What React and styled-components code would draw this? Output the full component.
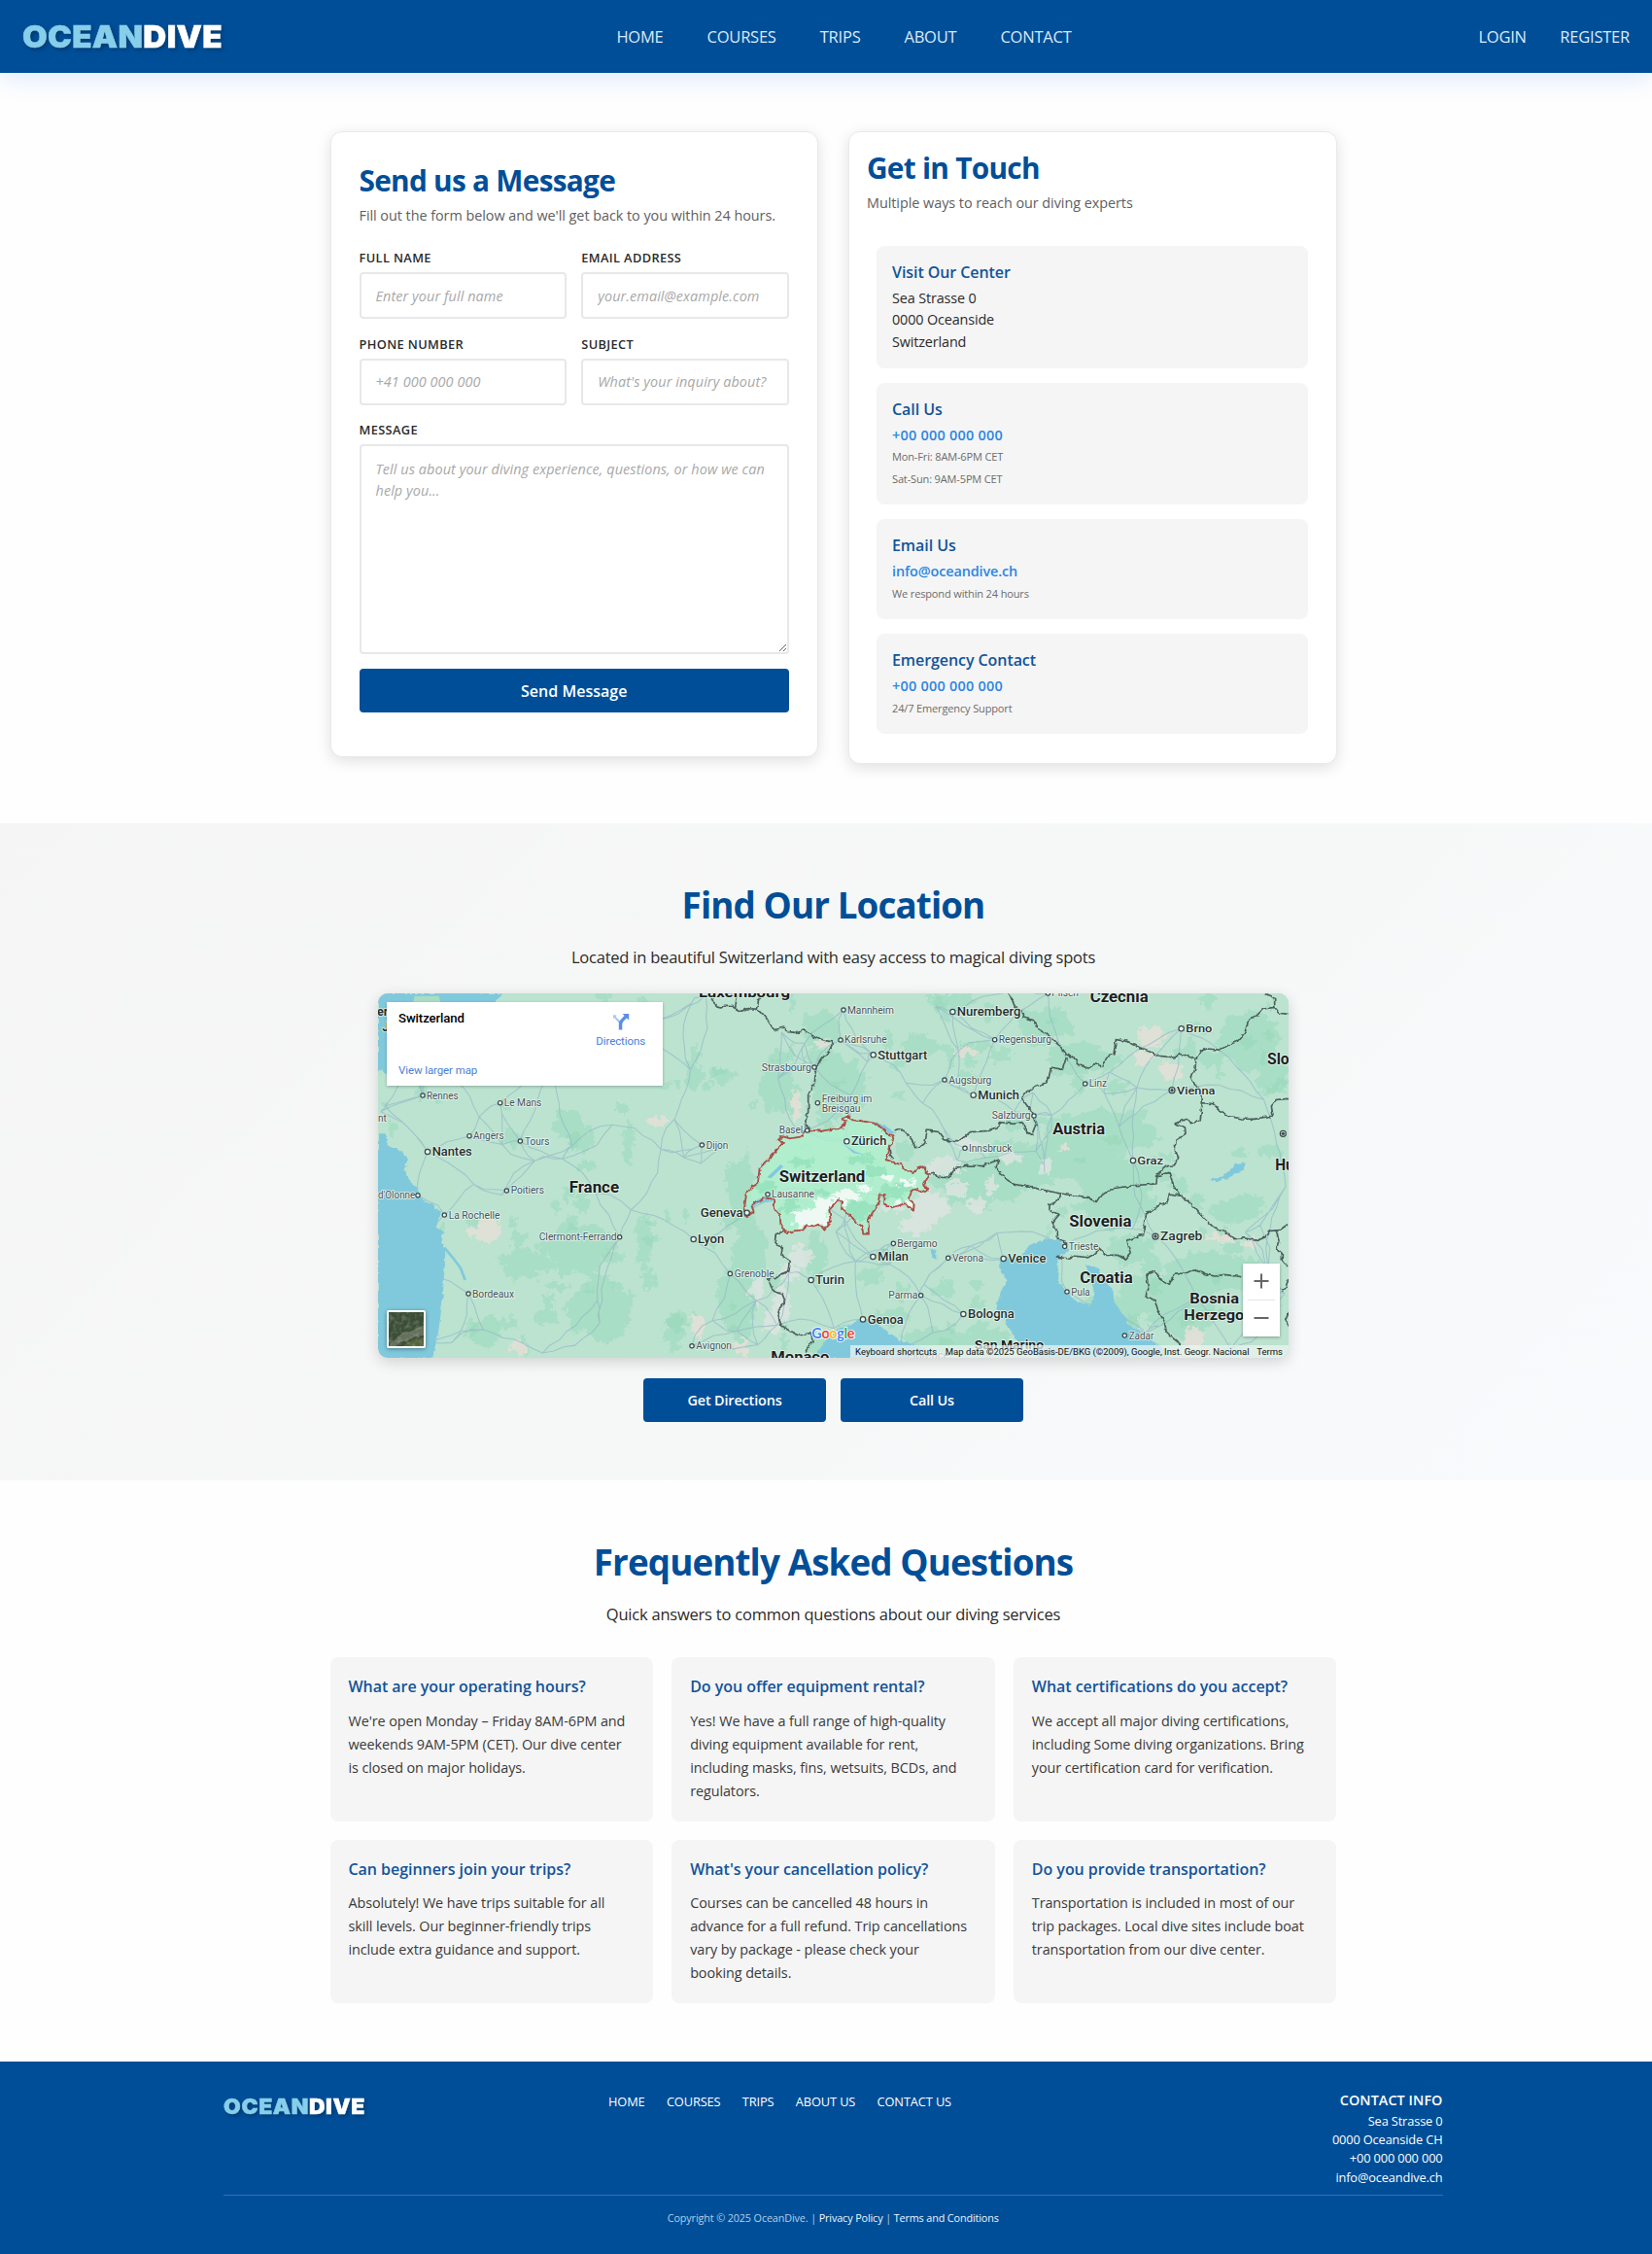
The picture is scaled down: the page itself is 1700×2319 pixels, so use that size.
import React from 'react';
import styled, { createGlobalStyle, css } from 'styled-components';

const blue = '#004e98';
const ui = "'Open Sans', 'Noto Sans', sans-serif";
const mapFont = "Roboto, 'Liberation Sans', sans-serif";

const GlobalStyle = createGlobalStyle`
  *, *::before, *::after { box-sizing: border-box; }
  body { margin: 0; background: #fefefe; font-family: ${ui}; color: #2b2b2b; }
  h2, h3, p { margin: 0; }
  a { color: inherit; text-decoration: none; }
`;

const Page = styled.div`
  width: 1700px;
  height: 2319px;
  overflow: hidden;
  display: flex;
  flex-direction: column;
`;

/* ---------- header ---------- */

const Header = styled.header`
  position: relative;
  flex: none;
  height: 74.8px;
  padding: 1px 23px 0;
  display: flex;
  align-items: center;
  justify-content: space-between;
  background: ${blue};
  box-shadow: 0 6px 24px rgba(0, 110, 255, 0.13);
`;

const Logo = styled.a`
  display: block;
  width: ${(p) => (p.$small ? 146 : 192.5)}px;
  font: 900 ${(p) => (p.$small ? 21.4 : 31)}px/1 Inter, 'Liberation Sans', sans-serif;
  letter-spacing: ${(p) => (p.$small ? 0.6 : 0.3)}px;
  -webkit-text-stroke: 0.5px currentColor;
  color: #fff;
  white-space: nowrap;
  transform: scaleX(1.07);
  transform-origin: left;
  text-shadow: 2px 2px 4px rgba(0, 0, 0, 0.3);
  ${(p) => p.$small && css`margin-top: 7px;`}
`;

const LogoTint = styled.span`
  color: #87ceeb;
`;

const Nav = styled.nav`
  display: flex;
  gap: ${(p) => p.$gap}px;
`;

const NavLink = styled.a`
  font-size: 16.5px;
  line-height: 26px;
  letter-spacing: -0.22px;
  color: #dbe9f7;
`;

/* ---------- sections ---------- */

const Section = styled.section`
  flex: none;
  padding: ${(p) => p.$pad};
  display: flex;
  flex-direction: column;
  align-items: center;
  ${(p) => p.$tinted && css`background: linear-gradient(135deg, #f5f5f5 0%, #f6f8f7 50%, #f8fafd 100%);`}
`;

const SectionTitle = styled.h2`
  font-size: 36.8px;
  line-height: 50px;
  font-weight: 700;
  letter-spacing: -0.9px;
  color: ${blue};
`;

const SectionText = styled.p`
  margin-top: 16.6px;
  font-size: 16.5px;
  line-height: 26px;
  letter-spacing: -0.22px;
`;

const Button = styled.button`
  height: ${(p) => (p.$wide ? 45.2 : 45.7)}px;
  width: ${(p) => (p.$wide ? '100%' : '188px')};
  padding: 0;
  border: 0;
  border-radius: 4px;
  background: ${blue};
  color: #fff;
  font: 600 ${(p) => (p.$wide ? 16 : 14.4)}px ${ui};
  letter-spacing: ${(p) => (p.$wide ? 0.03 : -0.13)}px;
`;

/* ---------- contact ---------- */

const ContactGrid = styled.div`
  width: 1036px;
  display: grid;
  grid-template-columns: 1fr 1fr;
  align-items: start;
  gap: 31px;
`;

const Card = styled.div`
  padding: ${(p) => p.$pad};
  border: 1px solid #e9e9ea;
  border-radius: 12px;
  background: #fff;
  box-shadow: 0 4px 15px rgba(0, 0, 0, 0.12);
`;

const CardTitle = styled.h2`
  font-size: 29.8px;
  line-height: 40px;
  letter-spacing: -0.72px;
  color: ${blue};
`;

const CardLead = styled.p`
  margin-top: 4px;
  font-size: 14.4px;
  line-height: 24px;
  letter-spacing: -0.04px;
  color: #606060;
`;

const Form = styled.form`
  margin-top: 21.4px;
  display: flex;
  flex-direction: column;
  gap: 15.3px;
`;

const FieldRow = styled.div`
  display: grid;
  grid-template-columns: 1fr 1fr;
  gap: 15px;
`;

const Field = styled.label`
  display: flex;
  flex-direction: column;
  gap: 5px;
`;

const FieldName = styled.span`
  font-size: 12.8px;
  line-height: 20px;
  font-weight: 600;
  letter-spacing: 0.37px;
  text-transform: uppercase;
`;

const control = css`
  width: 100%;
  border: 2px solid #e7e8ea;
  border-radius: 4px;
  background: #fff;
  font: 400 14.4px/22.5px ${ui};
  letter-spacing: 0.09px;
  &::placeholder { color: #a8a8a8; font-style: italic; opacity: 1; }
`;

const Input = styled.input`
  ${control}
  height: 48.3px;
  padding: 0 15px;
`;

const TextArea = styled.textarea`
  ${control}
  display: block;
  height: 215.5px;
  padding: 12.5px 15px;
  resize: vertical;
`;

const InfoList = styled.div`
  margin: 32px 10px 0;
  display: flex;
  flex-direction: column;
  gap: 15.3px;
`;

const InfoBox = styled.div`
  padding: 14px 16px 15px;
  border-radius: 8px;
  background: #f5f5f5;
`;

const InfoTitle = styled.h3`
  margin-bottom: 2px;
  font-size: 16px;
  line-height: 26px;
  font-weight: 600;
  letter-spacing: -0.07px;
  color: #12549a;
`;

const InfoText = styled.p`
  padding-top: 0.4px;
  font-size: 14.4px;
  line-height: 22.6px;
  letter-spacing: -0.14px;
`;

const InfoLink = styled.a`
  display: block;
  font-size: 14.4px;
  line-height: 23.3px;
  font-weight: 600;
  letter-spacing: ${(p) => (p.$phone ? 0.27 : -0.11)}px;
  color: #2b86e3;
`;

const InfoNote = styled.p`
  font-size: 11px;
  line-height: 22.4px;
  letter-spacing: -0.14px;
  color: #6c6c6c;
`;

/* ---------- map ---------- */

const MapFrame = styled.div`
  position: relative;
  width: 937px;
  height: 375.4px;
  border-radius: 10px;
  overflow: hidden;
  background: #bbe3d0;
  font-family: ${mapFont};
`;

const MapShadow = styled.div`
  margin-top: 23.5px;
  border-radius: 10px;
  box-shadow: 0 4px 15px rgba(0, 0, 0, 0.16);
`;

const MapArt = styled.svg`
  display: block;
  width: 100%;
  height: 100%;
`;

const PlaceCard = styled.div`
  position: absolute;
  left: 9px;
  top: 9.5px;
  width: 284px;
  height: 86px;
  padding: 9px 18px 9px 12px;
  display: flex;
  justify-content: space-between;
  background: #fff;
  box-shadow: 0 1px 3px rgba(0, 0, 0, 0.25);
`;

const PlaceColumn = styled.div`
  display: flex;
  flex-direction: column;
  justify-content: space-between;
`;

const PlaceName = styled.span`
  font-size: 13.2px;
  line-height: 15px;
  font-weight: 500;
  letter-spacing: -0.1px;
  color: #000;
`;

const MapLink = styled.a`
  font-size: 11.5px;
  line-height: 14px;
  letter-spacing: -0.1px;
  color: #4a80dc;
`;

const Directions = styled.a`
  display: flex;
  flex-direction: column;
  align-items: center;
  gap: 4px;
  padding-top: 2px;
  font-size: 11.5px;
  letter-spacing: -0.1px;
  line-height: 14px;
  color: #4a80dc;
`;

const ZoomControl = styled.div`
  position: absolute;
  left: 890px;
  top: 277.7px;
  width: 38px;
  height: 75.6px;
  display: flex;
  flex-direction: column;
  align-items: center;
  background: #fff;
  box-shadow: 0 1px 3px rgba(0, 0, 0, 0.3);
`;

const ZoomRule = styled.div`
  width: 28px;
  height: 1px;
  background: #e6e6e6;
`;

const ZoomButton = styled.div`
  flex: 1;
  display: flex;
  align-items: center;
`;

const Satellite = styled.div`
  position: absolute;
  left: 9px;
  top: 326.3px;
  width: 39.5px;
  height: 39px;
  border: 2px solid #fff;
  border-radius: 2px;
  overflow: hidden;
  box-shadow: 0 1px 4px rgba(0, 0, 0, 0.4);
`;

const Attribution = styled.div`
  position: absolute;
  right: 0;
  bottom: 0;
  width: 451px;
  height: 13px;
  padding: 0 6px 0 5px;
  display: flex;
  align-items: center;
  background: rgba(238, 245, 243, 0.72);
  font-size: 9.5px;
  line-height: 13px;
  color: #111;
  white-space: nowrap;
`;

const Credit = styled.span`
  width: ${(p) => p.$w}px;
  letter-spacing: ${(p) => p.$ls || 0}px;
`;

const MapActions = styled.div`
  margin-top: 20.3px;
  display: flex;
  gap: 15px;
`;

/* Map space is three units per pixel; the eastern half starts at x = 1440. */
const EAST = 1440;
const parse = (s, dx = 0) => s.trim().split(/\s+/).map((p) => {
  const [x, y] = p.split(',').map(Number);
  return [x + dx, y];
});
const line = (pts) => 'M' + pts.map((p) => p.join(' ')).join('L');
const west = (s) => line(parse(s));
const east = (s) => line(parse(s, EAST));

const random = (seed) => () => {
  seed = (seed * 16807) % 2147483647;
  return (seed - 1) / 2147483646;
};

const blob = (cx, cy, rx, ry, seed) => {
  const r = random(seed * 7919 + 13);
  const pts = [];
  for (let i = 0; i < 16; i++) {
    const a = (i / 16) * Math.PI * 2;
    const k = 0.65 + r() * 0.5;
    pts.push([(cx + Math.cos(a) * rx * k).toFixed(1), (cy + Math.sin(a) * ry * k).toFixed(1)]);
  }
  return line(pts) + 'Z';
};
const blobs = (list, seed) => list.map((b, i) => blob(...b, i + seed)).join('');

const cities = [
  // text, x, baseline, width, size, marker x, marker y, marker kind
  ['Rennes', 177, 363, 98, 30, 165, 352],
  ['Le Mans', 416, 386, 116, 30, 404, 375],
  ['Angers', 321, 488, 95, 30, 309, 477],
  ['Tours', 480, 504, 76, 30, 466, 493],
  ['Nantes', 194, 537, 123, 37, 180, 526],
  ['Poitiers', 437, 656, 103, 30, 424, 646],
  ["d'Olonne", 27, 670, 115, 30, 150, 660],
  ['La Rochelle', 245, 732, 158, 30, 232, 721],
  ['Clermont-Ferrand', 524, 800, 240, 30, 773, 789],
  ['Lyon', 1014, 809, 82, 37, 1001, 796],
  ['Geneva', 1022, 726, 132, 37, 1166, 714],
  ['Dijon', 1040, 516, 68, 30, 1027, 505],
  ['Strasbourg', 1211, 276, 154, 30, 1374, 265],
  ['Basel', 1265, 470, 74, 30, 1352, 460],
  ['Lausanne', 1242, 668, 132, 30, 1230, 657],
  ['Grenoble', 1127, 913, 123, 30, 1114, 902],
  ['Turin', 1377, 935, 90, 37, 1364, 922],
  ['Bordeaux', 318, 975, 129, 30, 306, 964],
  ['Avignon', 1009, 1136, 110, 30, 996, 1125],
  ['Mannheim', EAST + 36, 99, 144, 30, EAST + 24, 88],
  ['Nuremberg', EAST + 374, 107, 197, 37, EAST + 361, 94],
  ['Karlsruhe', EAST + 27, 191, 131, 30, EAST + 15, 181],
  ['Regensburg', EAST + 503, 191, 163, 30, EAST + 491, 180],
  ['Stuttgart', EAST + 130, 240, 153, 37, EAST + 116, 227],
  ['Augsburg', EAST + 349, 316, 132, 30, EAST + 336, 304],
  ['Munich', EAST + 439, 364, 128, 37, EAST + 425, 351],
  ['Linz', EAST + 782, 326, 55, 30, EAST + 770, 316],
  ['Salzburg', EAST + 482, 425, 120, 30, EAST + 612, 415],
  ['Zürich', EAST + 48, 506, 109, 37, EAST + 34, 494],
  ['Innsbruck', EAST + 411, 526, 133, 30, EAST + 399, 515],
  ['Brno', EAST + 1081, 156, 81, 34, EAST + 1067, 146],
  ['Vienna', EAST + 1053, 348, 118, 35, EAST + 1038, 336, 'capital'],
  ['Graz', EAST + 931, 565, 80, 35, EAST + 918, 553],
  ['Zagreb', EAST + 1002, 800, 130, 37, EAST + 987, 787, 'capital'],
  ['Bergamo', EAST + 190, 820, 124, 30, EAST + 178, 809],
  ['Milan', EAST + 130, 863, 95, 37, EAST + 115, 850],
  ['Verona', EAST + 360, 865, 96, 30, EAST + 347, 854],
  ['Venice', EAST + 532, 868, 117, 37, EAST + 518, 856],
  ['Trieste', EAST + 719, 829, 92, 30, EAST + 707, 818],
  ['Parma', EAST + 163, 980, 90, 30, EAST + 263, 969],
  ['Pula', EAST + 727, 969, 58, 30, EAST + 714, 958],
  ['Bologna', EAST + 408, 1040, 143, 36, EAST + 394, 1027],
  ['Genoa', EAST + 98, 1057, 111, 36, EAST + 84, 1043],
  ['Zadar', EAST + 905, 1104, 77, 30, EAST + 892, 1093],
  ['Pilsen', EAST + 667, 47, 83, 30, EAST + 655, 37],
];

const countries = [
  ['Luxembourg', 1017, 50, 282, 46],
  ['France', 617, 651, 154, 48],
  ['Switzerland', 1265, 619, 266, 48],
  ['Monaco', 1240, 1175, 180, 46],
  ['Czechia', EAST + 785, 63, 180, 48],
  ['Austria', EAST + 670, 471, 161, 48],
  ['Slovenia', EAST + 721, 757, 192, 48],
  ['Croatia', EAST + 754, 932, 163, 48],
  ['Bosnia', EAST + 1093, 993, 152, 46],
  ['Herzego', EAST + 1075, 1045, 186, 46],
  ['San Marino', EAST + 428, 1136, 214, 40],
  ['Slo', EAST + 1332, 256, 68, 48],
  ['Hu', EAST + 1357, 583, 58, 48],
];

const nodes = (() => {
  const r = random(4242);
  const out = cities.map((c) => [c[5], c[6]]);
  for (let i = 0; i < 95; i++) out.push([30 + r() * 2800, 40 + r() * 1120]);
  return out;
})();

const roads = (() => {
  const r = random(99);
  const seen = new Set();
  const out = [];
  nodes.forEach((a, i) => {
    nodes
      .map((b, j) => [Math.hypot(a[0] - b[0], a[1] - b[1]), j])
      .filter(([, j]) => j !== i)
      .sort((p, q) => p[0] - q[0])
      .slice(0, 3)
      .forEach(([d, j]) => {
        const key = Math.min(i, j) + '-' + Math.max(i, j);
        if (seen.has(key) || d > 420) return;
        seen.add(key);
        const b = nodes[j];
        const n = Math.max(3, Math.round(d / 35));
        const bend = (r() - 0.5) * d * 0.25;
        const pts = [];
        for (let k = 0; k <= n; k++) {
          const t = k / n;
          const w = Math.sin(t * Math.PI) * bend + (k % n ? (r() - 0.5) * 10 : 0);
          pts.push([
            (a[0] + (b[0] - a[0]) * t - ((b[1] - a[1]) / (d || 1)) * w).toFixed(1),
            (a[1] + (b[1] - a[1]) * t + ((b[0] - a[0]) / (d || 1)) * w).toFixed(1),
          ]);
        }
        out.push(line(pts));
      });
  });
  return out.join('');
})();

const forests = (() => {
  const r = random(777);
  const out = [];
  for (let i = 0; i < 150; i++) {
    out.push(blob(30 + r() * 2800, 40 + r() * 1110, 10 + r() * 32, 8 + r() * 26, i + 1));
  }
  return out.join('');
})();

const woodland = blobs([
  [610, 440, 50, 60], [655, 490, 40, 60], [1270, 330, 60, 110], [1390, 150, 60, 70], [1420, 330, 50, 130],
  [1090, 290, 40, 28], [1000, 290, 30, 45], [1150, 640, 50, 130], [850, 800, 30, 90], [800, 500, 20, 70],
  [1180, 830, 60, 110], [360, 1080, 60, 50], [940, 1080, 35, 60], [1140, 970, 60, 140], [1380, 860, 40, 80],
  [2260, 450, 190, 70], [2150, 540, 190, 70], [2330, 600, 170, 60], [2000, 560, 160, 70], [1900, 620, 150, 90],
  [2080, 140, 90, 60], [2200, 240, 120, 50], [2300, 700, 120, 70], [2350, 830, 90, 50], [2420, 960, 110, 70],
  [2520, 1010, 130, 100], [2600, 900, 160, 60], [2720, 180, 100, 110], [2790, 280, 60, 70], [1480, 320, 60, 90],
  [1700, 200, 60, 40], [1800, 60, 90, 30], [1760, 1110, 130, 50], [1900, 1110, 80, 60], [1600, 1040, 70, 30],
  [700, 1010, 110, 110], [640, 820, 120, 90], [480, 870, 90, 50], [2330, 1020, 50, 90], [2690, 700, 90, 50],
], 300);

const snow = blobs([
  [1730, 700, 60, 60], [1690, 750, 60, 30], [1780, 570, 60, 30], [1875, 690, 35, 30], [1980, 545, 50, 16],
  [1920, 630, 20, 35], [1810, 640, 40, 30], [1330, 850, 45, 35], [1195, 960, 26, 50], [1270, 990, 35, 60],
  [1250, 1050, 35, 45], [1620, 700, 40, 16], [1850, 500, 50, 16], [2090, 570, 20, 25], [1300, 900, 30, 30],
], 500);

const towns = blobs([
  [890, 435, 32, 22], [360, 770, 50, 45], [1015, 1065, 22, 45], [465, 1130, 30, 25], [1315, 385, 14, 60],
  [1405, 190, 28, 14], [2415, 170, 50, 38], [2385, 235, 34, 26], [2475, 275, 38, 30], [1845, 215, 38, 14],
  [2545, 1100, 36, 40], [2630, 790, 55, 14], [2720, 810, 26, 14], [2150, 515, 24, 10], [1150, 1130, 25, 30],
], 700);

const glaciers = blobs([
  [1370, 725, 70, 26], [1420, 690, 50, 24], [1470, 660, 40, 18], [1660, 622, 26, 14], [1600, 604, 24, 10],
  [1340, 745, 40, 18], [1530, 640, 26, 12], [1650, 685, 22, 10], [1395, 735, 30, 18],
], 900);

const valleys = blobs([
  [1500, 705, 60, 36], [1620, 645, 60, 24], [1560, 585, 44, 20], [1300, 695, 34, 26], [1220, 630, 40, 20],
  [1400, 650, 30, 14], [1520, 550, 50, 16], [1330, 560, 40, 16],
], 950);

const swissOutline =
  parse('1360,460 1400,462 1440,455 1460,455 1470,430 1460,424 1480,415 1492,428 1515,430 1570,440 1597,470 1615,475 1620,495 1605,510 1595,550 1640,565 1655,582 1678,592 1692,578 1710,568 1725,600 1710,628 1725,645 1706,652 1690,640 1675,645 1665,670 1682,690 1680,708 1655,685 1612,698 1590,690 1592,658 1575,660 1570,690 1555,712 1540,735 1542,780 1525,780 1520,755 1505,745 1490,728 1470,710 1458,700 1460,680 1450,670 1440,685 1420,705 1425,740 1405,765 1385,750 1370,758 1350,752 1335,768 1310,770 1290,778 1270,750 1268,720 1250,700 1252,672 1215,668 1180,690 1187,712 1165,725 1158,700 1165,650 1185,630 1200,620 1205,575 1240,545 1255,520 1280,500 1262,490 1275,478 1300,485 1330,480 1345,462');

const borders = [
  west('1060,55 1070,78 1085,82 1100,74 1120,75 1130,85 1150,92 1165,84 1190,85 1210,95 1225,112 1240,135 1250,150 1280,142 1290,155 1315,158 1340,150 1380,175 1432,188 1420,215 1400,235 1380,262 1375,310 1365,335 1355,350 1355,400 1345,440 1360,460'),
  west('1130,82 1135,45'), west('1195,86 1205,50'),
  west('1282,770 1255,780 1252,805 1275,825 1272,845 1300,865 1295,895 1270,905 1255,915 1232,918 1245,955 1275,965 1285,990 1260,1020 1270,1060 1300,1080 1325,1093 1365,1085 1368,1110 1345,1145'),
  east('185,460 200,454 215,465 235,485 245,513 265,508 275,500 283,460 320,465 335,485 350,492 380,492 400,478 415,465 460,462 500,450 505,435 550,440 575,435 590,465 605,475 618,440 605,405 575,360 590,340 620,325 655,310 665,265 700,272 712,235'),
  east('530,37 545,55 550,75 580,100 580,112 610,120 630,150 655,165 690,195 712,225 740,240 750,258 780,268 800,255 825,262 832,235 858,225 865,180 900,185 940,205 1000,230 1045,235 1060,222 1112,240'),
  east('1112,240 1125,218 1145,208 1190,212 1215,195 1240,185 1262,160 1275,120 1300,105 1320,85 1355,80 1370,98 1400,102'),
  east('1325,37 1355,50 1355,80'),
  east('1112,240 1110,270 1098,300 1112,325 1130,340 1132,375 1125,430 1100,438 1085,425 1048,438 1078,450 1080,470 1050,490 1048,520 1058,545 1045,568 1022,570 992,595'),
  east('1132,375 1165,378 1190,402 1210,415 1250,424 1290,425 1350,415 1345,385 1360,365 1400,362'),
  east('285,595 305,593 315,605 350,605 370,575 410,568 450,570 505,550 495,575 515,600 545,625 600,635 695,655 770,665 805,680 815,665 850,640 925,630 990,625 992,600 1030,590'),
  east('165,510 168,535 178,548'),
  east('695,655 690,675 660,690 660,705 690,720 668,745 685,775 685,792 712,805 712,815'),
  east('680,850 715,855 740,848 780,852 800,840 815,825 835,845 870,845 895,857 910,840 900,800 950,780 955,720 1000,690 1025,680 1030,655 1065,662 1045,635 1030,590'),
  east('1065,662 1100,690 1140,735 1170,762 1205,775 1230,795 1265,792 1300,800 1325,790 1340,770 1370,768 1395,750'),
  east('1360,770 1368,800 1362,825 1378,840 1378,860 1395,880'),
  east('1065,1120 1040,1100 1020,1080 1015,1050 995,1015 985,985 957,970 965,950 960,905 985,895 1005,920 1030,935 1045,905 1080,900 1110,888 1140,902 1170,910 1200,905 1255,912'),
  east('1398,920 1388,945 1375,955'), east('1400,1020 1388,1045 1400,1065'),
].join('');

const water = [
  west('27,470 50,470 58,490 55,505 85,515 105,530 120,550 105,585 130,620 150,640 158,672 195,690 222,712 205,755 228,775 222,800 235,835 228,960 222,1020 212,1090 195,1163 27,1163') + 'Z',
  west('27,37 410,37 390,65 400,110 60,300 40,270 27,280') + 'Z',
  west('1440,1075 1418,1100 1395,1125 1370,1163 1740,1163 1715,1130 1640,1108 1590,1075 1560,1045 1520,1040 1470,1065') + 'Z',
  east('505,862 530,850 565,855 600,812 650,795 695,795 700,815 720,830 690,850 682,880 690,930 712,960 740,985 785,1000 800,970 790,930 770,870 810,885 830,920 855,950 860,990 890,1030 900,1055 950,1090 1010,1130 1035,1163 630,1163 560,1110 525,1050 495,1010 512,950 530,925 505,890') + 'Z',
  east('1155,612 1195,602 1235,565 1265,560 1262,580 1215,605 1175,620') + 'Z',
  east('125,432 160,450 188,468 165,470 140,452') + 'Z',
  east('292,825 310,830 310,855 298,850') + 'Z',
  west('1175,695 1200,672 1250,664 1245,680 1205,684 1182,702') + 'Z',
].join('');

function EuropeMap() {
  return (
    <MapArt viewBox="27 37 2811 1126" preserveAspectRatio="none" role="img" aria-label="Map of Switzerland">
      <defs>
        <filter id="rough" x="-5%" y="-5%" width="110%" height="110%">
          <feTurbulence type="fractalNoise" baseFrequency="0.05" numOctaves="3" seed="4" />
          <feDisplacementMap in="SourceGraphic" scale="40" xChannelSelector="R" yChannelSelector="G" />
        </filter>
        <filter id="wobble" x="-5%" y="-5%" width="110%" height="110%">
          <feTurbulence type="fractalNoise" baseFrequency="0.06" numOctaves="2" seed="9" />
          <feDisplacementMap in="SourceGraphic" scale="13" xChannelSelector="R" yChannelSelector="G" />
        </filter>
        <clipPath id="swissClip"><path d={line(swissOutline) + 'Z'} /></clipPath>
      </defs>
      <rect x="27" y="37" width="2811" height="1126" fill="#bbe3d0" />
      <g filter="url(#rough)">
        <path d={woodland} fill="#a1dcc1" opacity="0.75" />
        <path d={forests} fill="#93d7b8" opacity="0.45" />
        <path d={towns} fill="#e3e0d6" opacity="0.9" />
        <path d={snow} fill="#dfe5e1" opacity="0.8" />
      </g>
      <path d={roads} fill="none" stroke="#93b7c6" strokeWidth="3.2" opacity="0.68" strokeLinejoin="round" />
      <path d={water} fill="#80c9dd" filter="url(#wobble)" />
      <path d={west('232,822 262,858 282,885 296,922')} fill="none" stroke="#80c9dd" strokeWidth="8" />
      <path d={west('140,45 215,45 220,66 135,66') + 'Z'} fill="#a9dcc4" />
      <g clipPath="url(#swissClip)">
        <rect x="1140" y="400" width="600" height="400" fill="#aef0cd" opacity="0.8" />
        <g filter="url(#rough)">
          <path d={valleys} fill="#8fdfb8" opacity="0.7" />
          <path d={glaciers} fill="#f4faf6" opacity="0.92" />
        </g>
        <path d={west('1175,695 1200,672 1250,664 1245,680 1205,684 1182,702') + 'Z'} fill="#80c9dd" />
        <path d={west('1228,605 1270,565 1278,572 1240,608') + 'Z'} fill="#80c9dd" />
        <path d={east('20,500 60,525 90,535 55,530') + 'Z'} fill="#80c9dd" />
      </g>
      <path d={borders} fill="none" stroke="#4c5f5c" strokeWidth="5" strokeLinejoin="round" filter="url(#wobble)" />
      <path d={line(swissOutline) + 'Z'} fill="none" stroke="#ad4c45" strokeWidth="5.5" strokeLinejoin="round" filter="url(#wobble)" />

      <g fontFamily={mapFont} stroke="#e4f4ec" strokeWidth="5" strokeLinejoin="round" paintOrder="stroke">
        {cities.map(([t, x, y, w, s]) => (
          <text key={t} x={x} y={y} textLength={w} lengthAdjust="spacingAndGlyphs" fontSize={s} fontWeight={s > 31 ? 500 : 400} fill={s > 31 ? '#25302f' : '#48535a'}>{t}</text>
        ))}
        {['Freiburg im', 'Breisgau'].map((t, i) => (
          <text key={t} x="1397" y={372 + i * 31} textLength={i ? 119 : 155} lengthAdjust="spacingAndGlyphs" fontSize="30" fill="#48535a">{t}</text>
        ))}
        <text x="27" y="434" fontSize="30" fill="#48535a">nt</text>
        <text x="24" y="105" fontSize="38" fontWeight="700" fill="#25302f">ern</text>
        <text x="40" y="154" fontSize="38" fontWeight="700" fill="#25302f">J</text>
        <text x={EAST + 220} y="1166" fontSize="34" fill="#48535a">Florence</text>
        {countries.map(([t, x, y, w, s]) => (
          <text key={t} x={x} y={y} textLength={w} lengthAdjust="spacingAndGlyphs" fontSize={s} fontWeight="700" fill="#1b2122">{t}</text>
        ))}
      </g>
      <g fill="#eaf6f0" stroke="#39474b" strokeWidth="3.6">
        {cities.map(([t, , , , s, x, y, kind]) => (
          <circle key={t} cx={x} cy={y} r={kind ? 9 : s > 31 ? 8 : 6.5} />
        ))}
        <circle cx="1384" cy="375" r="6.5" />
        <circle cx={EAST + 1381} cy="470" r="9" />
      </g>
      <g fill="#39474b">
        <circle cx={EAST + 1038} cy="336" r="5" />
        <circle cx={EAST + 987} cy="787" r="5" />
        <circle cx={EAST + 1381} cy="470" r="5" />
      </g>
      <text x="1366" y="1101" fontFamily="Lato, sans-serif" fontSize="43" fontWeight="700" textLength="132" stroke="#fff" strokeWidth="5" paintOrder="stroke">
        <tspan fill="#4285f4">G</tspan><tspan fill="#ea4335">o</tspan><tspan fill="#fbbc05">o</tspan>
        <tspan fill="#4285f4">g</tspan><tspan fill="#34a853">l</tspan><tspan fill="#ea4335">e</tspan>
      </text>
    </MapArt>
  );
}

function DirectionsIcon() {
  return (
    <svg width="18" height="18" viewBox="0 0 18 18">
      <path d="M1 2.2L4.6 2.6 3.6 3.9 9.4 9.6 7.8 11.6 2.3 5.3 1.2 6.2Z" fill="#a9c5f3" />
      <path d="M10.6 1H17.2V7.6L14.9 5.4C12.2 8 10.3 9 10.3 12V17.4H6.8V12C6.8 8.2 9.6 6.2 12.6 3.1Z" fill="#5b8fe6" />
    </svg>
  );
}

function SatelliteImage() {
  return (
    <svg width="36" height="36" viewBox="0 0 36 36">
      <defs>
        <filter id="grain">
          <feTurbulence type="fractalNoise" baseFrequency="0.22" numOctaves="3" seed="3" />
          <feColorMatrix values="0 0 0 0 0.6  0 0 0 0 0.65  0 0 0 0 0.5  1.6 0 0 0 -0.7" />
        </filter>
      </defs>
      <rect width="36" height="36" fill="#3a4d37" />
      <path d="M2 32L9 26 14 21 22 20 28 17 36 14V24L28 25 20 29 12 31 6 36H0Z" fill="#66705c" />
      <path d="M12 36L22 30 36 26V36Z" fill="#55643f" />
      <rect width="36" height="36" filter="url(#grain)" opacity="0.45" />
    </svg>
  );
}

function MapPanel() {
  return (
    <MapShadow>
      <MapFrame>
        <EuropeMap />
        <PlaceCard>
          <PlaceColumn>
            <PlaceName>Switzerland</PlaceName>
            <MapLink>View larger map</MapLink>
          </PlaceColumn>
          <Directions>
            <DirectionsIcon />
            Directions
          </Directions>
        </PlaceCard>
        <Satellite><SatelliteImage /></Satellite>
        <ZoomControl>
          <ZoomButton>
            <svg width="16" height="16" viewBox="0 0 16 16"><path d="M8 0.5V15.5M0.5 8H15.5" stroke="#666" strokeWidth="2" /></svg>
          </ZoomButton>
          <ZoomRule />
          <ZoomButton>
            <svg width="16" height="16" viewBox="0 0 16 16"><path d="M0.5 8H15.5" stroke="#666" strokeWidth="2" /></svg>
          </ZoomButton>
        </ZoomControl>
        <Attribution>
          <Credit $w={93} $ls={0.1}>Keyboard shortcuts</Credit>
          <Credit $w={321} $ls={-0.02}>Map data ©2025 GeoBasis-DE/BKG (©2009), Google, Inst. Geogr. Nacional</Credit>
          <Credit>Terms</Credit>
        </Attribution>
      </MapFrame>
    </MapShadow>
  );
}

/* ---------- faq ---------- */

const FaqGrid = styled.div`
  width: 1036px;
  margin-top: 30.8px;
  display: grid;
  grid-template-columns: repeat(3, 1fr);
  grid-auto-rows: 168.6px;
  gap: 19px;
`;

const FaqCard = styled.div`
  padding: 18.4px 23.5px 0 19px;
  border-radius: 8px;
  background: #f5f5f5;
`;

const FaqTitle = styled.h3`
  font-size: 16px;
  line-height: 24px;
  font-weight: 600;
  letter-spacing: -0.04px;
  color: #12549a;
`;

const FaqText = styled.p`
  margin-top: 11.2px;
  font-size: 14.4px;
  line-height: 24px;
  letter-spacing: -0.09px;
  color: #3a3a3a;
`;

const faqs = [
  ['What are your operating hours?', "We're open Monday – Friday 8AM-6PM and weekends 9AM-5PM (CET). Our dive center is closed on major holidays."],
  ['Do you offer equipment rental?', 'Yes! We have a full range of high-quality diving equipment available for rent, including masks, fins, wetsuits, BCDs, and regulators.'],
  ['What certifications do you accept?', 'We accept all major diving certifications, including Some diving organizations. Bring your certification card for verification.'],
  ['Can beginners join your trips?', 'Absolutely! We have trips suitable for all skill levels. Our beginner-friendly trips include extra guidance and support.'],
  ["What's your cancellation policy?", 'Courses can be cancelled 48 hours in advance for a full refund. Trip cancellations vary by package - please check your booking details.'],
  ['Do you provide transportation?', 'Transportation is included in most of our trip packages. Local dive sites include boat transportation from our dive center.'],
];

/* ---------- footer ---------- */

const Footer = styled.footer`
  flex: 1;
  padding: 29px 0 0 14.5px;
  display: flex;
  flex-direction: column;
  align-items: center;
  background: ${blue};
  color: #e4eef8;
`;

const FooterTop = styled.div`
  width: 1254.5px;
  height: 108.7px;
  display: grid;
  grid-template-columns: 396px auto 1fr;
  border-bottom: 1px solid rgba(255, 255, 255, 0.2);
`;

const FooterLink = styled.a`
  margin-top: 1.3px;
  font-size: 12.8px;
  line-height: 20px;
  letter-spacing: -0.11px;
  color: #fff;
`;

const FooterContact = styled.div`
  text-align: right;
  font-size: 12.8px;
  line-height: 19.2px;
  letter-spacing: -0.14px;
  color: #fff;
`;

const FooterContactTitle = styled.div`
  margin-bottom: 0.6px;
  font-size: 14.4px;
  line-height: 22px;
  font-weight: 600;
  letter-spacing: 0.06px;
`;

const Copyright = styled.p`
  margin-top: 13.5px;
  font-size: 10.8px;
  line-height: 18px;
  letter-spacing: -0.12px;
  color: #b6cee6;
`;

const LegalLink = styled.a`
  color: #f0f6fc;
`;

function Brand({ small }) {
  return (
    <Logo $small={small}>
      <LogoTint>OCEAN</LogoTint>DIVE
    </Logo>
  );
}

function TextField({ name, placeholder, type = 'text' }) {
  return (
    <Field>
      <FieldName>{name}</FieldName>
      <Input type={type} placeholder={placeholder} />
    </Field>
  );
}

export default function App() {
  return (
    <Page>
      <GlobalStyle />
      <Header>
        <Brand />
        <Nav $gap={45}>
          {['HOME', 'COURSES', 'TRIPS', 'ABOUT', 'CONTACT'].map((t) => <NavLink key={t}>{t}</NavLink>)}
        </Nav>
        <Nav $gap={34.5}>
          <NavLink>LOGIN</NavLink>
          <NavLink>REGISTER</NavLink>
        </Nav>
      </Header>

      <Section $pad="60.6px 0 61px 15px">
        <ContactGrid>
          <Card $pad="29.4px 29px 45px">
            <CardTitle>Send us a Message</CardTitle>
            <CardLead>Fill out the form below and we'll get back to you within 24 hours.</CardLead>
            <Form>
              <FieldRow>
                <TextField name="Full Name" placeholder="Enter your full name" />
                <TextField name="Email Address" placeholder="your.email@example.com" type="email" />
              </FieldRow>
              <FieldRow>
                <TextField name="Phone Number" placeholder="+41 000 000 000" type="tel" />
                <TextField name="Subject" placeholder="What's your inquiry about?" />
              </FieldRow>
              <Field>
                <FieldName>Message</FieldName>
                <TextArea placeholder="Tell us about your diving experience, questions, or how we can help you..." />
              </Field>
              <Button type="button" $wide>Send Message</Button>
            </Form>
          </Card>

          <Card $pad="17px 18.5px 30.5px 18px">
            <CardTitle>Get in Touch</CardTitle>
            <CardLead>Multiple ways to reach our diving experts</CardLead>
            <InfoList>
              <InfoBox>
                <InfoTitle>Visit Our Center</InfoTitle>
                <InfoText>Sea Strasse 0<br />0000 Oceanside<br />Switzerland</InfoText>
              </InfoBox>
              <InfoBox>
                <InfoTitle>Call Us</InfoTitle>
                <InfoLink $phone>+00 000 000 000</InfoLink>
                <InfoNote>Mon-Fri: 8AM-6PM CET<br />Sat-Sun: 9AM-5PM CET</InfoNote>
              </InfoBox>
              <InfoBox>
                <InfoTitle>Email Us</InfoTitle>
                <InfoLink>info@oceandive.ch</InfoLink>
                <InfoNote>We respond within 24 hours</InfoNote>
              </InfoBox>
              <InfoBox>
                <InfoTitle>Emergency Contact</InfoTitle>
                <InfoLink $phone>+00 000 000 000</InfoLink>
                <InfoNote>24/7 Emergency Support</InfoNote>
              </InfoBox>
            </InfoList>
          </Card>
        </ContactGrid>
      </Section>

      <Section $tinted $pad="58.3px 0 60.1px 15px">
        <SectionTitle>Find Our Location</SectionTitle>
        <SectionText>Located in beautiful Switzerland with easy access to magical diving spots</SectionText>
        <MapPanel />
        <MapActions>
          <Button>Get Directions</Button>
          <Button>Call Us</Button>
        </MapActions>
      </Section>

      <Section $pad="58.3px 0 60.2px 15px">
        <SectionTitle>Frequently Asked Questions</SectionTitle>
        <SectionText>Quick answers to common questions about our diving services</SectionText>
        <FaqGrid>
          {faqs.map(([q, a]) => (
            <FaqCard key={q}>
              <FaqTitle>{q}</FaqTitle>
              <FaqText>{a}</FaqText>
            </FaqCard>
          ))}
        </FaqGrid>
      </Section>

      <Footer>
        <FooterTop>
          <Brand small />
          <Nav $gap={22.3}>
            {['HOME', 'COURSES', 'TRIPS', 'ABOUT US', 'CONTACT US'].map((t) => <FooterLink key={t}>{t}</FooterLink>)}
          </Nav>
          <FooterContact>
            <FooterContactTitle>CONTACT INFO</FooterContactTitle>
            Sea Strasse 0<br />0000 Oceanside CH<br />+00 000 000 000<br />info@oceandive.ch
          </FooterContact>
        </FooterTop>
        <Copyright>
          Copyright © 2025 OceanDive. | <LegalLink>Privacy Policy</LegalLink> | <LegalLink>Terms and Conditions</LegalLink>
        </Copyright>
      </Footer>
    </Page>
  );
}
